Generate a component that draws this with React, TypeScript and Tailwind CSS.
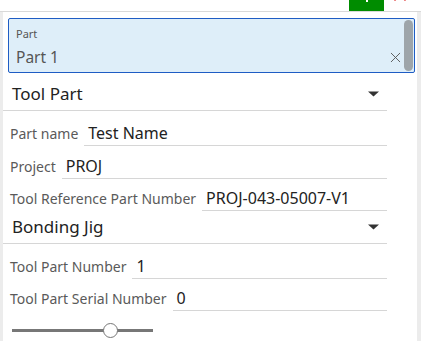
import { X } from "lucide-react";

const font = { fontFamily: '"Noto Sans", "Liberation Sans", sans-serif' };

function Caret() {
  return (
    <svg width="11" height="6" viewBox="0 0 11 6">
      <path d="M0 0.5 L11 0.5 L5.5 5.5 Z" fill="#333" />
    </svg>
  );
}

function Dropdown({ value, h }: { value: string; h: string }) {
  return (
    <div className={"flex items-end justify-between w-[384px] border-b border-[#d6d6d6] pl-[9px] " + h}>
      <span className="text-[17px] leading-[24px] text-[#222] pb-[4px]">{value}</span>
      <span className="pb-[13px] pr-[8px] flex"><Caret /></span>
    </div>
  );
}

function Field({ label, value, h }: { label: string; value: string; h: string }) {
  return (
    <div className={"flex items-end w-[384px] pl-[7px] " + h}>
      <span className="text-[14px] leading-[20px] text-[#5a5a5a] pb-[2px] mr-[6px] whitespace-nowrap">{label}</span>
      <div className="flex-1 border-b border-[#d6d6d6] pl-[4px]">
        <span className="block text-[16px] leading-[23px] text-[#222]">{value}</span>
      </div>
    </div>
  );
}

export default function App() {
  return (
    <div className="w-[421px] h-[341px] overflow-hidden bg-white" style={font}>
      <div className="h-[12px] border-b border-[#d9d9d9] flex justify-end items-start">
        <div className="w-[35px] h-[11px] bg-[#008c00] flex justify-center">
          <div className="w-[2px] h-[2px] bg-white" />
        </div>
        <div className="w-[37px] h-[11px] relative">
          <X size={20} color="#e03030" strokeWidth={2} className="absolute left-[6px] top-[-15px]" />
        </div>
      </div>
      <div className="flex h-[329px]">
        <div className="w-[3px] bg-[#ececec]" />
        <div className="flex-1 flex flex-col">
          <div className="mt-[6px] ml-[5px] mr-[2px] h-[55px] bg-[#deeef9] border border-[#1e5cc4] rounded-[2px] flex">
            <div className="flex-1 pl-[7px] pt-[8px] flex flex-col">
              <span className="text-[11px] leading-[14px] text-[#555]">Part</span>
              <span className="text-[15.5px] leading-[22px] text-[#555] mt-[5px]">Part 1</span>
            </div>
            <X size={17} color="#555" strokeWidth={1.3} className="self-end mb-[6px]" />
            <div className="w-[9px] my-[1px] mr-[1px] rounded-full bg-[#9ea5aa]" />
          </div>
          <Dropdown value="Tool Part" h="h-[38px]" />
          <Field label="Part name" value="Test Name" h="h-[35px]" />
          <Field label="Project" value="PROJ" h="h-[33px]" />
          <Field label="Tool Reference Part Number" value="PROJ-043-05007-V1" h="h-[32px]" />
          <Dropdown value="Bonding Jig" h="h-[33px]" />
          <Field label="Tool Part Number" value="1" h="h-[35px]" />
          <Field label="Tool Part Serial Number" value="0" h="h-[32px]" />
          <div className="ml-[9px] mt-[12px] w-[141px] h-[15px] relative flex items-center">
            <div className="w-full h-[3px] bg-[#777]" />
            <div className="absolute left-[91px] top-0 w-[15px] h-[15px] rounded-full bg-white border border-[#777]" />
          </div>
        </div>
        <div className="w-[4px] bg-[#ececec]" />
      </div>
    </div>
  );
}
